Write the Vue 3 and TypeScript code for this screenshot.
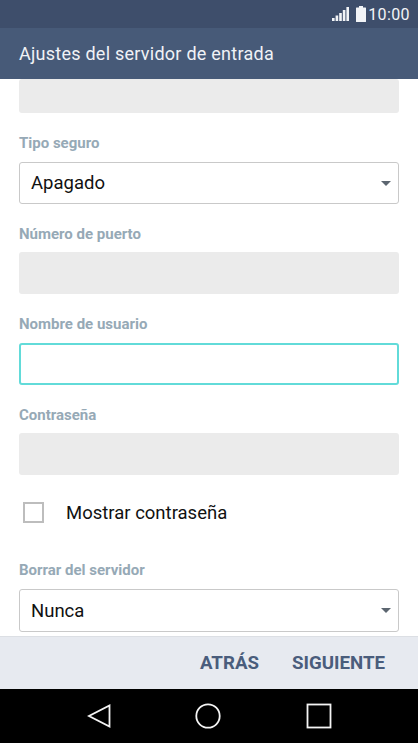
<script setup lang="ts">
interface Field { label: string; kind: 'disabled' | 'select' | 'focus'; value?: string }
const upper: Field[] = [
  { label: 'Tipo seguro', kind: 'select', value: 'Apagado' },
  { label: 'Número de puerto', kind: 'disabled' },
  { label: 'Nombre de usuario', kind: 'focus' },
  { label: 'Contraseña', kind: 'disabled' },
]
</script>

<template>
  <div class="phone">
    <div class="status">
      <svg class="signal" width="17" height="15" viewBox="0 0 17 15">
        <rect x="0" y="11" width="2.6" height="3" />
        <rect x="3.6" y="8.5" width="2.6" height="5.5" />
        <rect x="7.2" y="6" width="2.6" height="8" />
        <rect x="10.8" y="3" width="2.6" height="11" />
        <rect x="14.4" y="0" width="2.6" height="14" />
      </svg>
      <svg class="battery" width="10" height="16" viewBox="0 0 10 16">
        <path d="M3 0h4v1.500h2.500a.5.5 0 0 1 .5.5v13.500a.5.5 0 0 1-.5.5h-9a.5.5 0 0 1-.5-.5V2a.5.5 0 0 1 .5-.5H3z" />
      </svg>
      <span class="time">10:00</span>
    </div>
    <header class="appbar">Ajustes del servidor de entrada</header>
    <main class="content">
      <div class="box disabled first"></div>
      <section v-for="f in upper" :key="f.label" class="field">
        <label class="label">{{ f.label }}</label>
        <div class="box" :class="f.kind">
          <span v-if="f.value">{{ f.value }}</span>
          <i v-if="f.kind === 'select'" class="caret"></i>
        </div>
      </section>
      <div class="check">
        <span class="checkbox"></span>
        <span>Mostrar contraseña</span>
      </div>
      <section class="field last">
        <label class="label">Borrar del servidor</label>
        <div class="box select">
          <span>Nunca</span>
          <i class="caret"></i>
        </div>
      </section>
    </main>
    <footer class="actions">
      <span>ATRÁS</span>
      <span>SIGUIENTE</span>
    </footer>
    <nav class="nav">
      <svg width="24" height="26" viewBox="0 0 24 26" class="back"><path d="M22.500 2.500v21L2 13z" /></svg>
      <svg width="26" height="26" viewBox="0 0 26 26" class="home"><circle cx="13" cy="13" r="11.700" /></svg>
      <svg width="26" height="26" viewBox="0 0 26 26" class="recent"><rect x="1.500" y="1.500" width="23" height="23" /></svg>
    </nav>
  </div>
</template>

<style scoped>
.phone {
  width: 418px;
  height: 743px;
  display: flex;
  flex-direction: column;
  overflow: hidden;
  background: #fff;
  font-family: Roboto, "Liberation Sans", sans-serif;
}
.status {
  height: 28px;
  flex: none;
  background: #3e4e6b;
  display: flex;
  align-items: center;
  justify-content: flex-end;
  padding-right: 8px;
  color: #f2f4f7;
  font-size: 16px;
}
.signal { fill: #f2f4f7; margin-right: 7px; }
.battery { fill: #f2f4f7; margin-right: 2px; }
.time { letter-spacing: 0.4px; }
.appbar {
  height: 51px;
  flex: none;
  box-sizing: border-box;
  background: #475a78;
  color: #f0f2f6;
  font-size: 18px;
  letter-spacing: 0.25px;
  padding: 16px 0 0 19px;
  line-height: 20px;
}
.content {
  flex: 1;
  min-height: 0;
  overflow: hidden;
  padding: 0 19px;
  display: flex;
  flex-direction: column;
}
.box {
  flex: none;
  box-sizing: border-box;
  height: 42px;
  border-radius: 3px;
  position: relative;
  display: flex;
  align-items: center;
  padding-left: 11px;
  font-size: 18.500px;
  color: #111;
}
.box.first { height: 34px; }
.disabled { background: #ebebeb; }
.select { border: 1.500px solid #c9c9c9; }
.focus { border: 2px solid #62dbd9; }
.field { display: flex; flex-direction: column; flex: none; }
.label {
  height: 48.500px;
  box-sizing: border-box;
  padding-top: 21px;
  line-height: 18px;
  font-size: 15px;
  font-weight: 700;
  color: #96a9b6;
}
.caret {
  position: absolute;
  right: 7px;
  top: 18px;
  border-left: 5px solid transparent;
  border-right: 5px solid transparent;
  border-top: 5px solid #5c6670;
}
.check {
  flex: none;
  height: 21px;
  margin-top: 27px;
  margin-left: 4px;
  display: flex;
  align-items: center;
  gap: 22px;
  font-size: 18.500px;
  color: #111;
}
.checkbox {
  width: 21px;
  height: 21px;
  box-sizing: border-box;
  border: 2px solid #bdbdbd;
}
.last .label { height: 66px; padding-top: 38px; }
.last .box { height: 43px; }
.actions {
  flex: none;
  height: 53px;
  box-sizing: border-box;
  background: #e7eaf0;
  border-top: 1px solid #dcdfe4;
  display: flex;
  justify-content: flex-end;
  align-items: center;
  gap: 33px;
  padding-right: 33px;
  color: #4a5d7c;
  font-weight: 700;
  font-size: 18.700px;
}
.nav {
  flex: none;
  height: 54px;
  background: #000;
  display: flex;
  align-items: center;
  padding: 0 0 0 87px;
  gap: 84px;
}
.recent { margin-left: 1px; }
.nav svg { fill: none; stroke: #f4f4f4; stroke-width: 1.800; }
.back path { stroke-linejoin: miter; }
</style>

<style>
html, body { margin: 0; background: #fff; }
</style>
